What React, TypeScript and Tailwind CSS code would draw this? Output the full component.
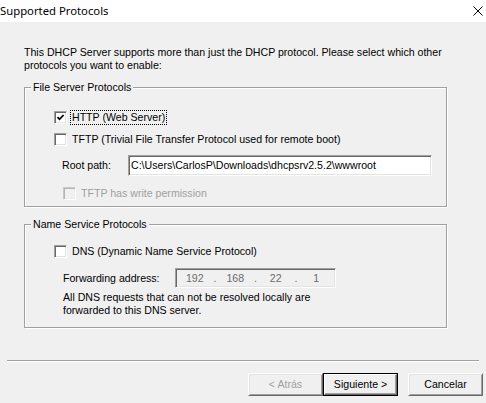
import React from "react";

function CheckBox({ checked, disabled }: { checked?: boolean; disabled?: boolean }) {
  return (
    <span
      className={
        disabled
          ? "w-[13px] h-[13px] shrink-0 flex items-center justify-center bg-[#f0f0f0] border border-t-[#c8c8c8] border-l-[#c8c8c8] border-r-white border-b-white shadow-[inset_1px_1px_0_#b4b4b4,inset_-1px_-1px_0_#ececec]"
          : "w-[13px] h-[13px] shrink-0 flex items-center justify-center bg-white border border-t-[#a0a0a0] border-l-[#a0a0a0] border-r-white border-b-white shadow-[inset_1px_1px_0_#696969,inset_-1px_-1px_0_#e3e3e3]"
      }
    >
      {checked && (
        <svg width="9" height="9" viewBox="0 0 9 9">
          <path d="M1.5 4.2 L3.5 6.3 L7.6 2" fill="none" stroke="#000" strokeWidth="1.8" />
        </svg>
      )}
    </span>
  );
}

function Button({ label, variant }: { label: string; variant?: "default" | "disabled" }) {
  if (variant === "default") {
    return (
      <div className="w-[75px] h-[23px] border border-black">
        <div className="w-full h-full flex items-center justify-center bg-[#f0f0f0] border border-t-white border-l-white border-r-[#696969] border-b-[#696969] shadow-[inset_-1px_-1px_0_#a0a0a0]">
          {label}
        </div>
      </div>
    );
  }
  return (
    <div className="w-[75px] h-[23px] flex items-center justify-center bg-[#f0f0f0] border border-t-white border-l-white border-r-[#696969] border-b-[#696969] shadow-[inset_1px_1px_0_#e3e3e3,inset_-1px_-1px_0_#a0a0a0]">
      <span className={variant === "disabled" ? "text-[#a0a0a0]" : ""}>{label}</span>
    </div>
  );
}

function GroupBox({ title, className, children }: { title: string; className: string; children: React.ReactNode }) {
  return (
    <div className={`relative ml-[24px] w-[423px] border border-[#a0a0a0] shadow-[inset_1px_1px_0_#fff,1px_1px_0_#fff] flex flex-col ${className}`}>
      <span className="absolute -top-[7px] left-[6px] px-[2px] bg-[#f0f0f0]">{title}</span>
      {children}
    </div>
  );
}

export default function App() {
  const ip = ["192", "168", "22", "1"];
  return (
    <div className="w-[486px] h-[403px] bg-[#f0f0f0] text-black text-[10.6px] leading-[13px] font-['Liberation_Sans',Arial,sans-serif] flex flex-col overflow-hidden">
      <div className="h-[22px] shrink-0 bg-white flex items-center justify-between">
        <span className="text-[11.3px] leading-none font-['Noto_Sans',sans-serif]">Supported Protocols</span>
        <svg className="mr-[3px]" width="10" height="10" viewBox="0 0 10 10">
          <path d="M0.5 0.5 L9.5 9.5 M9.5 0.5 L0.5 9.5" stroke="#000" strokeWidth="1" />
        </svg>
      </div>

      <p className="mt-[24px] ml-[24px]">
        This DHCP Server supports more than just the DHCP protocol. Please select which other
        <br />
        protocols you want to enable:
      </p>

      <GroupBox title="File Server Protocols" className="mt-[15px] h-[120px]">
        <div className="flex items-center ml-[29px] mt-[23px] h-[13px]">
          <CheckBox checked />
          <span className="ml-[3px] px-[1px] border border-dotted border-black leading-[13px]">HTTP (Web Server)</span>
        </div>
        <div className="flex items-center ml-[29px] mt-[9px] h-[13px]">
          <CheckBox />
          <span className="ml-[5px]">TFTP (Trivial File Transfer Protocol used for remote boot)</span>
        </div>
        <div className="flex items-center ml-[37px] mt-[9px] h-[21px]">
          <span className="w-[66px]">Root path:</span>
          <div className="w-[304px] h-[21px] bg-white flex items-center pl-[2px] border border-t-[#a0a0a0] border-l-[#a0a0a0] border-r-white border-b-white shadow-[inset_1px_1px_0_#696969,inset_-1px_-1px_0_#e3e3e3]">
            C:\Users\CarlosP\Downloads\dhcpsrv2.5.2\wwwroot
          </div>
        </div>
        <div className="flex items-center ml-[38px] mt-[11px] h-[13px]">
          <CheckBox disabled />
          <span className="ml-[5px] text-[#a0a0a0]">TFTP has write permission</span>
        </div>
      </GroupBox>

      <GroupBox title="Name Service Protocols" className="mt-[17px] h-[104px]">
        <div className="flex items-center ml-[29px] mt-[20px] h-[13px]">
          <CheckBox />
          <span className="ml-[5px]">DNS (Dynamic Name Service Protocol)</span>
        </div>
        <div className="flex items-center ml-[38px] mt-[10px] h-[20px]">
          <span className="w-[112px]">Forwarding address:</span>
          <div className="w-[161px] h-[20px] bg-[#f0f0f0] flex items-center text-[#6d6d6d] border border-t-[#a0a0a0] border-l-[#a0a0a0] border-r-white border-b-white shadow-[inset_1px_1px_0_#696969,inset_-1px_-1px_0_#e3e3e3]">
            {ip.map((n, i) => (
              <React.Fragment key={i}>
                <span className="flex-1 text-center">{n}</span>
                {i < 3 && <span>.</span>}
              </React.Fragment>
            ))}
          </div>
        </div>
        <p className="ml-[38px] mt-[3px]">
          All DNS requests that can not be resolved locally are
          <br />
          forwarded to this DNS server.
        </p>
      </GroupBox>

      <div className="mt-[32px] mx-[7px] h-[2px] border-t border-t-[#a0a0a0] border-b border-b-white" />

      <div className="mt-[11px] flex justify-end pr-[3px]">
        <Button label="< Atrás" variant="disabled" />
        <Button label="Siguiente >" variant="default" />
        <div className="ml-[10px]">
          <Button label="Cancelar" />
        </div>
      </div>
    </div>
  );
}
